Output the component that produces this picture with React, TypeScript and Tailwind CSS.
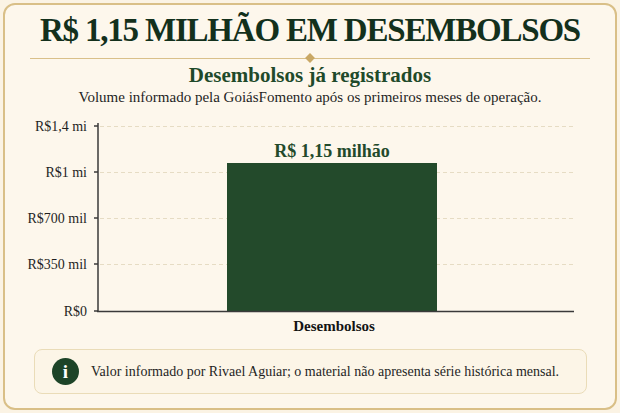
import React from "react";

const serif = { fontFamily: '"Liberation Serif", "Times New Roman", serif' };

function Chart() {
  const ox = 5;
  const oy = 107;
  const X = (x: number) => x - ox;
  const Y = (y: number) => y - oy;
  const ticks = [
    { y: 126, label: "R$1,4 mi" },
    { y: 172, label: "R$1 mi" },
    { y: 218, label: "R$700 mil" },
    { y: 264, label: "R$350 mil" },
    { y: 311, label: "R$0" },
  ];
  return (
    <svg width={610} height={233} viewBox="0 0 610 233" className="block" style={serif}>
      {ticks.slice(0, 4).map((t) => (
        <line
          key={"g" + t.y}
          x1={X(100)}
          x2={X(574)}
          y1={Y(t.y) + 0.5}
          y2={Y(t.y) + 0.5}
          stroke="#e6dcc4"
          strokeWidth={1}
          strokeDasharray="4 3"
        />
      ))}
      <rect x={X(227)} y={Y(163)} width={210} height={148} fill="#234a2b" />
      <line x1={X(98)} x2={X(98)} y1={Y(123)} y2={Y(312)} stroke="#3a3a3a" strokeWidth={1.5} />
      <line x1={X(97)} x2={X(574)} y1={Y(311.5)} y2={Y(311.5)} stroke="#3a3a3a" strokeWidth={1.5} />
      {ticks.map((t) => (
        <g key={t.y}>
          <line x1={X(94)} x2={X(98)} y1={Y(t.y)} y2={Y(t.y)} stroke="#3a3a3a" strokeWidth={1.5} />
          <text x={X(87)} y={Y(t.y) + 5} textAnchor="end" fontSize={14} fill="#1f1f1f">
            {t.label}
          </text>
        </g>
      ))}
      <text x={X(332)} y={Y(157)} textAnchor="middle" fontSize={18} fontWeight="bold" fill="#234a2b">
        R$ 1,15 milhão
      </text>
      <text x={X(334)} y={Y(331)} textAnchor="middle" fontSize={15} fontWeight="bold" fill="#141414">
        Desembolsos
      </text>
    </svg>
  );
}

export default function App() {
  return (
    <div className="w-[620px] h-[413px] bg-[#fbf3e4] p-[3px]" style={serif}>
      <div className="h-full rounded-[12px] border-2 border-[#d9bf87] bg-[#fdf7ec] flex flex-col pt-[3px]">
        <h1 className="h-[45px] leading-[45px] text-center text-[33px] font-bold text-[#13301c] tracking-[-1.2px]">
          R$ 1,15 MILHÃO EM DESEMBOLSOS
        </h1>
        <div className="relative h-[10px] mx-[25px] flex items-center">
          <div className="h-px w-full bg-[#d9c08a]" />
          <div className="absolute left-1/2 top-1/2 w-[7px] h-[7px] -translate-x-1/2 -translate-y-1/2 rotate-45 bg-[#c9a865]" />
        </div>
        <h2 className="h-[24px] leading-[24px] text-center text-[21px] font-bold text-[#1f4a2a]">
          Desembolsos já registrados
        </h2>
        <p className="h-[20px] leading-[20px] text-center text-[15px] text-[#1f1f1f]">
          Volume informado pela GoiásFomento após os primeiros meses de operação.
        </p>
        <Chart />
        <div className="mt-[9px] ml-[29px] mr-[28px] h-[45px] rounded-[8px] border border-[#eadcb8] bg-[#fcf5e7] flex items-center pl-[17px] gap-[12px]">
          <div className="w-[27px] h-[27px] rounded-full bg-[#1d4428] flex items-center justify-center text-white font-bold text-[19px] leading-none">
            i
          </div>
          <span className="text-[14px] text-[#1f1f1f]">
            Valor informado por Rivael Aguiar; o material não apresenta série histórica mensal.
          </span>
        </div>
      </div>
    </div>
  );
}
